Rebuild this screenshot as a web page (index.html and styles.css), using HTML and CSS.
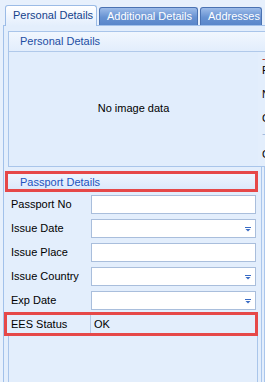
FILE: index.html
```html
<!DOCTYPE html>
<html>
<head>
<meta charset="utf-8">
<link rel="stylesheet" href="styles.css">
</head>
<body>
<div class="tabstrip">
  <div class="tab active t1">Personal Details</div>
  <div class="tab t2">Additional Details</div>
  <div class="tab t3">Addresses</div>
</div>
<div class="page">
  <div class="group">
    <div class="ghead">Personal Details</div>
    <div class="gbody">
      <div class="image">No image data</div>
      <div class="sidecol">
        <div class="req">-</div>
        <div class="sl s-f">First Name</div>
        <div class="sl s-n">Nationality</div>
        <div class="sl s-c">Country</div>
        <div class="sl s-d">-</div>
        <div class="sl s-c2">Citizenship</div>
      </div>
    </div>
  </div>
  <div class="lower">
    <div class="lcol">
      <div class="phead">Passport Details</div>
      <div class="row"><span class="lbl">Passport No</span><div class="input"></div></div>
      <div class="row"><span class="lbl">Issue Date</span><div class="input dd"><svg class="arrow" width="6" height="5" viewBox="0 0 6 5"><rect x="0" y="0" width="6" height="1" fill="#3a6cc4"/><path d="M0.5 2 H5.5 L3 4.6 Z" fill="#3a6cc4"/></svg></div></div>
      <div class="row"><span class="lbl">Issue Place</span><div class="input"></div></div>
      <div class="row"><span class="lbl">Issue Country</span><div class="input dd"><svg class="arrow" width="6" height="5" viewBox="0 0 6 5"><rect x="0" y="0" width="6" height="1" fill="#3a6cc4"/><path d="M0.5 2 H5.5 L3 4.6 Z" fill="#3a6cc4"/></svg></div></div>
      <div class="row last"><span class="lbl">Exp Date</span><div class="input dd"><svg class="arrow" width="6" height="5" viewBox="0 0 6 5"><rect x="0" y="0" width="6" height="1" fill="#3a6cc4"/><path d="M0.5 2 H5.5 L3 4.6 Z" fill="#3a6cc4"/></svg></div></div>
      <div class="ees"><span class="elbl">EES Status</span><span class="eval">OK</span></div>
      <div class="filler"></div>
    </div>
    <div class="strip"></div>
  </div>
</div>
</body>
</html>
```

FILE: styles.css
```css
* { box-sizing: border-box; }
html, body {
  margin: 0;
  padding: 0;
}
body {
  width: 265px;
  height: 382px;
  overflow: hidden;
  background: #e7f0fc;
  font-family: "Liberation Sans", Arial, sans-serif;
  font-size: 11px;
  color: #000;
}
.tabstrip {
  height: 25px;
  display: flex;
  align-items: flex-end;
  padding-left: 5px;
  gap: 2px;
  position: relative;
  z-index: 2;
}
.tab {
  height: 18px;
  line-height: 17px;
  padding-left: 7px;
  border: 1px solid #4a72b2;
  border-bottom: none;
  border-radius: 3px 3px 0 0;
  background: linear-gradient(#9dbce9, #6792d2 55%, #5a87ca);
  color: #fff;
  white-space: nowrap;
  overflow: hidden;
  flex-shrink: 0;
}
.tab.active {
  height: 21px;
  line-height: 19px;
  margin-bottom: -1px;
  border-color: #9bbbe6;
  background: linear-gradient(#ffffff, #edf4fe 60%, #e3eefc);
  color: #15428b;
}
.t1 { width: 92px; }
.t2 { width: 99px; padding-left: 7px; }
.t3 { width: 62px; padding-left: 7px; }
.page {
  margin-left: 3px;
  height: 357px;
  border-left: 1px solid #a2c1ea;
  border-top: 1px solid #a2c1ea;
  background: #e3eefc;
  padding: 5px 0 0 4px;
}
.group {
  width: 300px;
  border: 1px solid #a9c5ea;
  border-right: none;
}
.ghead {
  height: 20px;
  line-height: 19px;
  padding-left: 11px;
  border-bottom: 1px solid #b0c9ea;
  background: linear-gradient(#f1f7fe, #e2edfc);
  color: #1d4ea3;
}
.gbody {
  height: 114px;
  display: flex;
}
.image {
  flex: 0 0 249px;
  height: 114px;
  display: flex;
  align-items: center;
  justify-content: center;
  padding-bottom: 3px;
  background: #e1edfc;
}
.sidecol {
  flex: 0 0 auto;
  padding-left: 4px;
  white-space: nowrap;
}
.req {
  height: 8px;
  line-height: 8px;
  margin-top: 2px;
  color: #b03020;
}
.sl { height: 13px; line-height: 13px; }
.s-f { margin-top: 2px; }
.s-n { margin-top: 11px; }
.s-c { margin-top: 11px; }
.s-d { margin-top: 2px; color: #9db8dc; }
.s-c2 { margin-top: 8px; }
.lower {
  display: flex;
}
.lcol {
  width: 250px;
  flex-shrink: 0;
  display: flex;
  flex-direction: column;
}
.phead {
  margin-top: 4px;
  margin-left: -3px;
  width: 253px;
  height: 21px;
  border: 3px solid #e64848;
  background: linear-gradient(#eef5fe, #dce9fb);
  color: #2152bf;
  line-height: 17px;
  padding-left: 12px;
}
.row {
  display: flex;
  height: 19px;
  margin-bottom: 5px;
  padding-left: 3px;
}
.phead + .row { margin-top: 3px; }
.row.last { margin-bottom: 2px; }
.lbl {
  width: 80px;
  flex-shrink: 0;
  line-height: 19px;
  white-space: nowrap;
}
.input {
  width: 165px;
  flex-shrink: 0;
  height: 19px;
  background: #fff;
  border: 1px solid #a9bedc;
  display: flex;
  align-items: center;
  justify-content: flex-end;
  padding-right: 4px;
}
.arrow { display: block; margin-top: 1px; }
.ees {
  margin-left: -4px;
  width: 254px;
  height: 24px;
  border: 3px solid #e64848;
  display: flex;
  line-height: 18px;
}
.elbl {
  width: 84px;
  flex-shrink: 0;
  padding-left: 4px;
  border-right: 1px solid #b6cae6;
  white-space: nowrap;
}
.eval {
  padding-left: 3px;
}
.filler {
  flex: 1;
  height: 60px;
  border-left: 1px solid #a9c5ea;
  border-right: 1px solid #a9c5ea;
}
.strip {
  flex-shrink: 0;
  margin-left: 3px;
  width: 4px;
  height: 230px;
  border-left: 1px solid #aac6ec;
  border-right: 1px solid #aac6ec;
}
```
